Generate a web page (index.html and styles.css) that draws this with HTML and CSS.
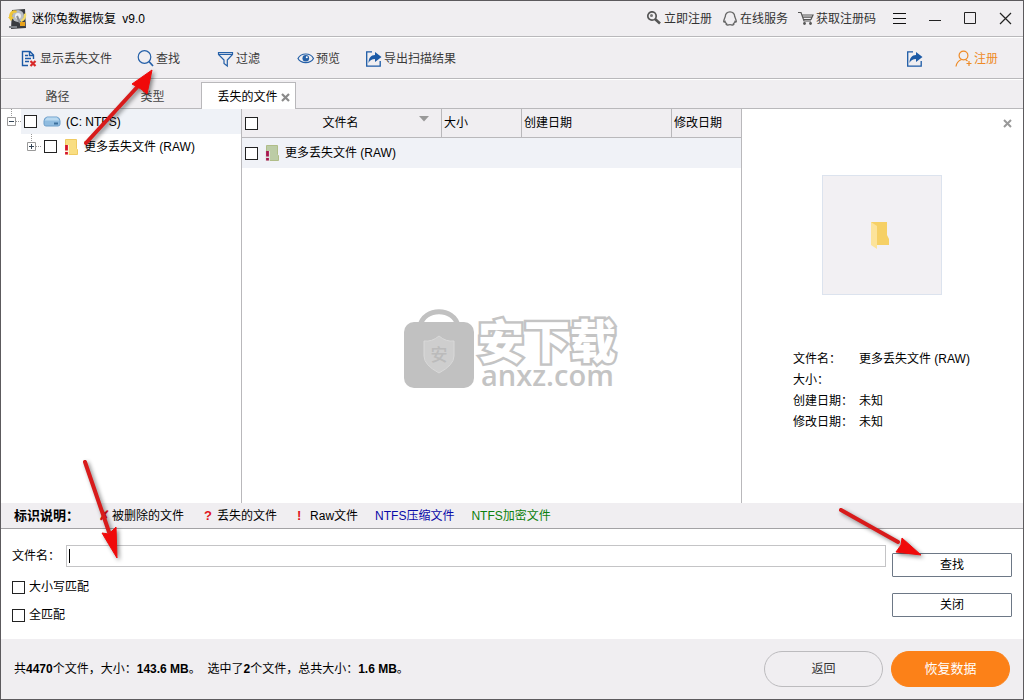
FILE: index.html
```html
<!DOCTYPE html>
<html lang="zh-CN">
<head>
<meta charset="utf-8">
<title>迷你兔数据恢复 v9.0</title>
<link rel="stylesheet" href="styles.css">
</head>
<body>
<div class="window">
  <header class="titlebar">
    <svg class="app-icon" width="20" height="22" viewBox="0 0 20 22">
      <path d="M4 2 17 1 18 20 3 21Z" fill="#3a3c40"/>
      <circle cx="10" cy="8" r="6" fill="#b9bdc2"/>
      <circle cx="10" cy="8" r="3" fill="#eceef0"/>
      <path d="M1 9C1 4 5 1 9 3l-1 2C6 4 4 6 4 9l2 0-3 4-3-4Z" fill="#efc63a"/>
      <path d="M18 5c1 4-1 8-5 9l0-2c2-1 3-3 3-6Z" fill="#f4dc6a"/>
      <path d="M9 8 12 15" stroke="#8a8d92" stroke-width="2"/>
      <path d="M12 14h5v4h-5Z" fill="#e8a21c"/>
      <path d="M1 18h8v2H1Z" fill="#7d8187"/>
    </svg>
    <h1 class="app-name">迷你兔数据恢复 <span>v9.0</span></h1>
    <nav class="title-links">
      <a href="#"><svg width="16" height="16" viewBox="0 0 16 16"><circle cx="6" cy="5" r="4.2" fill="none" stroke="#555" stroke-width="1.700"/><circle cx="5.500" cy="4.500" r="1.500" fill="#777"/><path d="M9 8l5 4.500" stroke="#555" stroke-width="2.600"/></svg>立即注册</a>
      <a href="#"><svg width="16" height="16" viewBox="0 0 16 16"><path d="M8 .8C5 .8 3.300 3 3.300 5.500c-.8 2-1.600 3.500-1.600 5 0 .8.7.7 1.300 0 .3 1 .8 1.600 1.500 2.200-.7.6-.5 1.300.8 1.300 1 0 1.900-.3 2.700-.3s1.700.3 2.700.3c1.300 0 1.500-.7.8-1.300.7-.6 1.200-1.200 1.500-2.200.6.7 1.300.8 1.300 0 0-1.500-.8-3-1.600-5C12.700 3 11 .8 8 .8Z" fill="none" stroke="#666" stroke-width="1.300"/></svg>在线服务</a>
      <a href="#"><svg width="16" height="16" viewBox="0 0 16 16"><path d="M0 1.500h3l3 8.500h7M4 4h11l-2 4.500H5.500M4.500 6.200h9.500" fill="none" stroke="#555" stroke-width="1.200"/><circle cx="6.500" cy="12.500" r="1.400" fill="#555"/><circle cx="12.500" cy="12.500" r="1.400" fill="#555"/></svg>获取注册码</a>
    </nav>
    <div class="window-buttons">
      <button type="button" aria-label="菜单"><svg width="15" height="13" viewBox="0 0 15 13"><path d="M1 1.500h13M1 6.500h13M1 11.500h13" stroke="#111"/></svg></button>
      <button type="button" aria-label="最小化"><svg width="13" height="13" viewBox="0 0 13 13"><path d="M0 8.500h12" stroke="#222"/></svg></button>
      <button type="button" aria-label="最大化"><svg width="13" height="13" viewBox="0 0 13 13"><path d="M.5 .5h11v11H.5Z" fill="none" stroke="#222"/></svg></button>
      <button type="button" aria-label="关闭窗口"><svg width="13" height="13" viewBox="0 0 13 13"><path d="M1 1l11 11M12 1L1 12" stroke="#222" stroke-width="1.200"/></svg></button>
    </div>
  </header>

  <div class="toolbar">
    <button type="button" class="tool tool-wide"><svg width="18" height="18" viewBox="0 0 18 18"><path d="M7 15.500H1.500V1.500H9L12.500 5v4M8.500 1.500V5.500h4M4 5.500h3M4 8.500h6M4 11.500h4" fill="none" stroke="#1c5aa6" stroke-width="1.400"/><path d="M9.500 11l5 5M14.500 11l-5 5" stroke="#d82a2a" stroke-width="2.200"/></svg>显示丢失文件</button>
    <button type="button" class="tool"><svg width="18" height="18" viewBox="0 0 18 18"><circle cx="7.500" cy="7" r="6.300" fill="none" stroke="#2560a8" stroke-width="1.200"/><path d="M12 11.500l4 4.500" stroke="#2560a8" stroke-width="1.700"/></svg>查找</button>
    <button type="button" class="tool"><svg width="18" height="18" viewBox="0 0 18 18"><path d="M1.500 2.700h14v1.800L10.300 10v6L7 13.500V10L1.500 4.500ZM2 4.500h13" fill="none" stroke="#2560a8" stroke-width="1.200"/></svg>过滤</button>
    <button type="button" class="tool tool-snug"><svg width="18" height="18" viewBox="0 0 18 18"><path d="M1 8.500C4 2.500 13.500 2.500 16.500 8.500 13.500 14 4 14 1 8.500Z" fill="none" stroke="#2560a8" stroke-width="1.200"/><circle cx="8.800" cy="8.300" r="3.300" fill="#2560a8"/><circle cx="9.800" cy="7.300" r="1" fill="#fff"/></svg>预览</button>
    <button type="button" class="tool"><svg width="18" height="18" viewBox="0 0 18 18"><path d="M7 1.800H1.700V16.200H15.200V11" fill="none" stroke="#1c5aa6" stroke-width="1.300"/><path d="M10 2l6.500 5-6.500 5V9C7 9 5 10 3.500 13 3.500 8 6 5 10 5Z" fill="#1c5aa6"/></svg>导出扫描结果</button>
    <button type="button" class="tool tool-share" aria-label="分享"><svg width="18" height="18" viewBox="0 0 18 18"><path d="M7 1.800H1.700V16.200H15.200V11" fill="none" stroke="#1c5aa6" stroke-width="1.300"/><path d="M10 2l6.500 5-6.500 5V9C7 9 5 10 3.500 13 3.500 8 6 5 10 5Z" fill="#1c5aa6"/></svg></button>
    <button type="button" class="tool tool-register"><svg width="18" height="18" viewBox="0 0 18 18"><circle cx="8.500" cy="5.500" r="4.400" fill="none" stroke="#ee8a26" stroke-width="1.200"/><path d="M1 16.500C1.500 13 4 10.500 6.500 9.500M10.500 9.500l2 1.500M11.500 13.500h5M14 11v5" fill="none" stroke="#ee8a26" stroke-width="1.200"/></svg>注册</button>
  </div>

  <div class="tabs" role="tablist">
    <button type="button" role="tab" class="tab">路径</button>
    <button type="button" role="tab" class="tab">类型</button>
    <button type="button" role="tab" class="tab tab-active" aria-selected="true">丢失的文件<svg width="9" height="9" viewBox="0 0 9 9"><path d="M1 1l7 7M8 1L1 8" stroke="#8a8a8a" stroke-width="2.200"/></svg></button>
  </div>

  <main class="main">
    <aside class="tree">
      <div class="tree-row">
        <svg class="branch" width="20" height="25" viewBox="0 0 20 25"><path d="M10.500 0v8M15 12.500h5" stroke="#999" stroke-dasharray="1 1"/><path d="M6.500 8.500h8v8h-8Z" fill="#fff" stroke="#999"/><path d="M8 12.500h5" stroke="#345"/></svg>
        <div class="node node-selected">
          <input type="checkbox" class="check" id="drive">
          <label for="drive"><svg width="18" height="14" viewBox="0 0 18 14"><path d="M4 2h10q3 1 3 4v3q0 2-2 2H3q-2 0-2-2V6q0-3 3-4Z" fill="#8fbce0" stroke="#6d9fcb"/><path d="M4 2.500h10l2.500 3h-15Z" fill="#b9d9f0"/><path d="M11 8.500h4" stroke="#3b6f9c" stroke-width="2"/></svg>(C: NTFS)</label>
        </div>
      </div>
      <div class="tree-row tree-child">
        <svg class="branch" width="20" height="25" viewBox="0 0 20 25"><path d="M10.500 0v8M15 12.500h5" stroke="#999" stroke-dasharray="1 1"/><path d="M6.500 8.500h8v8h-8Z" fill="#fff" stroke="#999"/><path d="M8 12.500h5M10.500 10v5" stroke="#345"/></svg>
        <div class="node">
          <input type="checkbox" class="check" id="raw-tree">
          <label for="raw-tree"><svg width="16" height="16" viewBox="0 0 16 16"><path d="M2.500 .5h11v9l1 1v5h-12Z" fill="#f9de82" stroke="#efcb62"/><path d="M1 6h5v10H1Z" fill="#fff" opacity=".7"/><path d="M3.500 6v5.500M3.500 13v2.500" stroke="#d6132a" stroke-width="2.800"/></svg>更多丢失文件 (RAW)</label>
        </div>
      </div>
    </aside>

    <section class="list">
      <table class="files">
        <colgroup><col><col class="col-size"><col class="col-created"><col class="col-changed"></colgroup>
        <thead>
          <tr>
            <th><div class="name-head"><input type="checkbox" class="check" aria-label="全选"><span>文件名</span><svg width="10" height="6" viewBox="0 0 10 6"><path d="M0 0h10L5 5.500Z" fill="#999"/></svg></div></th>
            <th>大小</th><th>创建日期</th><th>修改日期</th>
          </tr>
        </thead>
        <tbody>
          <tr>
            <td colspan="4"><div class="file-name"><input type="checkbox" class="check" id="raw-file"><label for="raw-file"><svg width="16" height="16" viewBox="0 0 16 16"><path d="M2.500 .5h11v9l1 1v5h-12Z" fill="#bccca6" stroke="#b0bd88"/><path d="M1 6h5v10H1Z" fill="#e6e6ea" opacity=".8"/><path d="M3.500 6v5.500M3.500 13v2.500" stroke="#a8174f" stroke-width="2.800"/></svg>更多丢失文件 (RAW)</label></div></td>
          </tr>
        </tbody>
      </table>
      <div class="watermark">
        <svg width="76" height="88" viewBox="0 0 76 88">
          <path d="M19 22C23 3 53 3 57 22" fill="none" stroke="#c1c1c1" stroke-width="5"/>
          <rect x="3" y="18" width="70" height="66" rx="10" fill="#c1c1c1"/>
          <path d="M38 32q7 6 15 5v15q0 9-15 17Q23 61 23 52V37q8 1 15-5Z" fill="#cecece" stroke="#d9d9d9"/>
          <text class="mark-badge" x="38" y="57" text-anchor="middle">安</text>
        </svg>
        <div class="mark-text">
          <div class="mark-title">安下载</div>
          <div class="mark-site">anxz.com</div>
        </div>
      </div>
    </section>

    <aside class="preview">
      <button type="button" class="preview-close" aria-label="关闭预览"><svg width="9" height="9" viewBox="0 0 9 9"><path d="M1 1l7 7M8 1L1 8" stroke="#999" stroke-width="2"/></svg></button>
      <div class="thumb"><svg width="20" height="28" viewBox="0 0 20 28"><path d="M1 1h16v13l2 4v6H1Z" fill="#f6d065"/><path d="M1 1l6 4v23l-6-4Z" fill="#fce39a"/></svg></div>
      <dl class="details">
        <dt>文件名：</dt><dd>更多丢失文件 (RAW)</dd>
        <dt>大小：</dt><dd></dd>
        <dt>创建日期：</dt><dd>未知</dd>
        <dt>修改日期：</dt><dd>未知</dd>
      </dl>
    </aside>
  </main>

  <div class="legend">
    <strong>标识说明：</strong>
    <span><b>✗</b>被删除的文件</span>
    <span><b>?</b>丢失的文件</span>
    <span><b>!</b>Raw文件</span>
    <span class="packed">NTFS压缩文件</span>
    <span class="encrypted">NTFS加密文件</span>
  </div>

  <form class="search">
    <div class="fields">
      <div class="field"><label for="filename">文件名：</label><input type="text" id="filename"><i class="caret"></i></div>
      <div class="option"><input type="checkbox" class="check" id="case"><label for="case">大小写匹配</label></div>
      <div class="option"><input type="checkbox" class="check" id="whole"><label for="whole">全匹配</label></div>
    </div>
    <div class="actions">
      <button type="button">查找</button>
      <button type="button">关闭</button>
    </div>
    <svg class="arrow arrow-field" width="50" height="110" viewBox="0 0 50 110"><path d="M10 6 34 76" stroke="#d81b1b" stroke-width="4" stroke-linecap="round"/><path d="M42 102 27 77 34 78 41 71Z" fill="#f00a0a" stroke="#f00a0a"/></svg>
    <svg class="arrow arrow-find" width="100" height="60" viewBox="0 0 100 60"><path d="M9 7 66 39" stroke="#d81b1b" stroke-width="4" stroke-linecap="round"/><path d="M89 52 64 49 69 42 70 35Z" fill="#f00a0a" stroke="#f00a0a"/></svg>
  </form>

  <footer class="footer">
    <p>共<b>4470</b>个文件，大小：<b>143.6 MB</b>。&nbsp;&nbsp;选中了<b>2</b>个文件，总共大小：<b>1.6 MB</b>。</p>
    <button type="button" class="pill">返回</button>
    <button type="button" class="pill pill-primary">恢复数据</button>
  </footer>
  <svg class="arrow arrow-tool" width="90" height="90" viewBox="0 0 90 90"><path d="M6 82 60 23" stroke="#d81b1b" stroke-width="4" stroke-linecap="round"/><path d="M72 9 67 33 61 28 52 23Z" fill="#f00a0a" stroke="#f00a0a"/></svg>
</div>
</body>
</html>
```
FILE: styles.css
```css
* { box-sizing: border-box; }

body {
  margin: 0;
  font: 12px/16px "Liberation Sans", "Noto Sans CJK SC", sans-serif;
  color: #000;
}

button, input { font: inherit; color: inherit; }
button { padding: 0; border: 0; background: none; }
svg { display: block; flex: none; }
a { color: inherit; text-decoration: none; }

.window {
  position: relative;
  display: flex;
  flex-direction: column;
  min-height: 100vh;
  border: 1px solid #5c5a5d;
  background: #f0eef1;
}

.check {
  appearance: none;
  flex: none;
  width: 13px;
  height: 13px;
  margin: 0;
  border: 1px solid #222;
  background: #fff;
}

/* Title bar */
.titlebar {
  display: flex;
  align-items: center;
  height: 36px;
  padding: 0 11px 0 7px;
  border-bottom: 1px solid #b9b8bb;
}
.app-name { margin: 0 0 0 4px; font-size: 12px; font-weight: normal; }
.app-name span { margin-left: 3px; }
.title-links { display: flex; gap: 10px; margin-left: auto; color: #333; }
.title-links a { display: flex; gap: 2px; }
.window-buttons { display: flex; align-items: center; gap: 22px; margin-left: 16px; }

/* Toolbar */
.toolbar {
  display: flex;
  align-items: center;
  height: 42px;
  padding: 2px 25px 0 20px;
  border-bottom: 1px solid #b9b8bb;
  box-shadow: inset 0 1px #fff, 0 1px #fff;
  color: #3a3a3a;
}
.tool { display: flex; align-items: center; gap: 1px; min-width: 80px; padding-right: 24px; }
.tool-wide { min-width: 116px; }
.tool-snug { min-width: 68px; }
.tool-share { min-width: 0; margin-left: auto; padding-right: 31px; }
.tool-register { min-width: 0; padding-right: 0; color: #ee8a26; }

/* Tabs */
.tabs {
  display: flex;
  align-items: flex-end;
  height: 30px;
  padding-left: 9px;
  border-bottom: 1px solid #b9b8bb;
}
.tab { width: 95px; height: 24px; padding-top: 2px; color: #444; }
.tab-active {
  display: flex;
  align-items: center;
  justify-content: center;
  gap: 3px;
  margin: 0 0 -1px 1px;
  padding-left: 10px;
  height: 27px;
  border: 1px solid #b9b8bb;
  border-bottom: 0;
  background: #fff;
  color: #000;
}

/* Panels */
.main { display: flex; flex: 1; background: #fff; }
.tree { width: 241px; border-right: 1px solid #b9b8bb; }
.tree-row { display: flex; height: 25px; }
.tree-child { padding-left: 20px; }
.node { display: flex; flex: 1; align-items: center; gap: 6px; padding-left: 3px; }
.node-selected { background: #eff2f7; }
.node label { display: flex; gap: 5px; align-items: center; }

.list { position: relative; flex: 1; }
.files { width: 100%; table-layout: fixed; border-collapse: separate; border-spacing: 0; }
.col-size { width: 80px; }
.col-created { width: 150px; }
.col-changed { width: 69px; }
.files th {
  height: 29px;
  padding: 0 0 0 2px;
  border-right: 1px solid #b9b8bb;
  border-bottom: 1px solid #b9b8bb;
  background: #f0eef1;
  font-weight: normal;
  text-align: left;
}
.files th:last-child { border-right: 0; }
.files td { height: 30px; padding: 0 3px; background: #f0f2f7; }
.name-head { display: flex; align-items: center; padding: 0 12px 0 1px; }
.name-head span { flex: 1; padding-left: 4px; text-align: center; }
.name-head svg { margin-bottom: 8px; }
.file-name { display: flex; align-items: center; gap: 6px; }
.file-name label { display: flex; align-items: center; gap: 5px; }

.watermark { position: absolute; left: 159px; top: 195px; display: flex; }
.mark-text { padding-top: 12px; padding-left: 1px; }
.mark-badge { font: 500 17px "Noto Sans CJK SC", sans-serif; fill: #bbb; }
.mark-title {
  font: 900 46px/44px "Noto Sans CJK SC", sans-serif;
  color: #fff;
  -webkit-text-stroke: 5px #c4c4c4;
  paint-order: stroke fill;
}
.mark-site { padding-left: 3px; font: 600 29px/30px "Open Sans", sans-serif; color: #c4c4c4; }

.preview {
  display: flex;
  flex-direction: column;
  align-items: center;
  width: 282px;
  padding-right: 1px;
  border-left: 1px solid #b9b8bb;
}
.preview-close { align-self: flex-end; margin: 10px 10px 0 0; }
.thumb {
  display: grid;
  place-items: center;
  width: 120px;
  height: 120px;
  margin-top: 47px;
  padding-right: 4px;
  border: 1px solid #dce3ee;
  background: #f2f0f3;
}
.details {
  display: grid;
  grid-template-columns: 66px 1fr;
  grid-auto-rows: 21px;
  align-items: center;
  align-self: stretch;
  margin: 53px 0 0;
  padding-left: 51px;
}
.details dd { margin: 0; }

/* Legend */
.legend {
  display: flex;
  align-items: center;
  gap: 17px;
  height: 26px;
  padding-left: 13px;
  border-bottom: 1px solid #a3a2a5;
}
.legend strong { font-size: 13px; }
.legend span { display: flex; }
.legend b { width: 16px; padding-left: 3px; color: #e0141c; font-size: 13px; }
.legend .packed { color: #0a0aa8; }
.legend .encrypted { color: #0c800c; }

/* Search form */
.search {
  position: relative;
  display: flex;
  gap: 6px;
  height: 110px;
  padding: 16px 11px 0;
  background: #fff;
}
.fields { display: flex; flex: 1; flex-direction: column; gap: 12px; }
.field { position: relative; display: flex; align-items: center; }
.field label { width: 54px; }
.field input { flex: 1; height: 22px; padding: 0 4px; border: 1px solid #c4c4c6; outline: 0; }
.caret { position: absolute; left: 57px; top: 4px; width: 1px; height: 14px; background: #000; }
.option { display: flex; align-items: center; gap: 4px; }
.actions { display: flex; flex-direction: column; gap: 16px; width: 120px; padding-top: 8px; }
.actions button { height: 24px; border: 1px solid #6d7886; border-radius: 1px; }

/* Footer */
.footer { display: flex; align-items: center; gap: 8px; height: 60px; padding: 0 13px; }
.footer p { flex: 1; margin: 0; }
.pill {
  width: 119px;
  height: 36px;
  border: 1px solid #bcbbbe;
  border-radius: 18px;
  color: #333;
}
.pill-primary { border-color: #fc8118; background: #fc8118; color: #fff; font-size: 13px; }

/* Pointer arrows */
.arrow { position: absolute; pointer-events: none; filter: drop-shadow(2px 2px 2px #0007); }
.arrow-tool { left: 79px; top: 60px; }
.arrow-field { left: 74px; top: -73px; }
.arrow-find { right: 91px; top: -26px; }
```
